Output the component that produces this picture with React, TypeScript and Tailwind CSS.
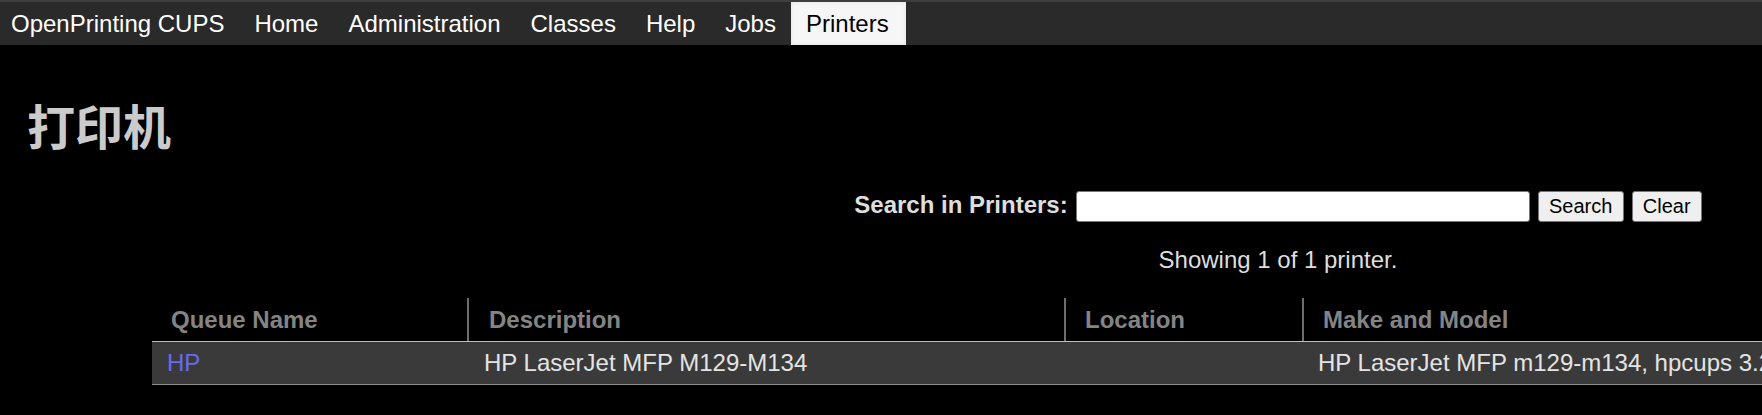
import React from "react";

const navItems = ["Home", "Administration", "Classes", "Help", "Jobs"];

export default function App() {
  return (
    <div className="w-[1762px] h-[415px] overflow-hidden bg-black font-['Liberation_Sans',Arial,sans-serif] text-[24px] text-[#e0e0e0]">
      <nav className="flex h-[45px] border-t-2 border-[#3e3e3e] bg-[#2a2a2a] text-white">
        <a className="flex h-full items-center pl-[11px] pr-[15px]">OpenPrinting CUPS</a>
        {navItems.map((n) => (
          <a key={n} className="flex h-full items-center px-[15px]">
            {n}
          </a>
        ))}
        <a className="flex h-full items-center pl-[15px] pr-[17px] bg-[#f6f6f6] text-black shadow-[inset_0_0_4px_rgba(0,0,0,0.08)]">
          Printers
        </a>
      </nav>
      <div className="w-[2529px] pl-[27px]">
        <h1 className="mt-[55px] text-[48px] leading-[48px] font-bold text-[#cbcbcb] font-['Noto_Sans_CJK_SC','Noto_Sans',sans-serif]">
          打印机
        </h1>
        <form className="mt-[43px] flex justify-center items-start h-[31px]">
          <b className="font-bold text-[#dedede] leading-[27.6px]">Search in Printers:</b>
          <input
            type="text"
            className="ml-[8px] w-[454px] h-[31px] rounded-[3px] border border-[#767676] bg-white text-[20px] text-black px-[3px]"
          />
          <button
            type="button"
            className="ml-[8px] w-[86px] h-[31px] rounded-[3px] border border-[#767676] bg-[#efefef] text-[20px] leading-[23px] text-black"
          >
            Search
          </button>
          <button
            type="button"
            className="ml-[8px] w-[70px] h-[31px] rounded-[3px] border border-[#767676] bg-[#efefef] text-[20px] leading-[23px] text-black"
          >
            Clear
          </button>
        </form>
        <p className="mt-[20px] text-center text-[#dedede]">Showing 1 of 1 printer.</p>
        <div className="ml-[125px] mt-[20px] w-[2300px]">
          <div className="grid grid-cols-[315px_597px_238px_1150px] border-b border-[#bdbdbd] font-bold text-[#848484]">
            <div className="h-[43px] flex items-center pl-[19px]">Queue Name</div>
            <div className="h-[43px] flex items-center pl-[20px] border-l-2 border-[#6e6e6e]">Description</div>
            <div className="h-[43px] flex items-center pl-[19px] border-l-2 border-[#6e6e6e]">Location</div>
            <div className="h-[43px] flex items-center pl-[19px] border-l-2 border-[#6e6e6e]">Make and Model</div>
          </div>
          <div className="grid grid-cols-[315px_597px_238px_1150px] bg-[#3a3a3a] border-b border-[#8c8c8c] text-[#e4e4e4]">
            <div className="h-[42px] flex items-center pl-[15px]">
              <a className="text-[#6a6af0]">HP</a>
            </div>
            <div className="h-[42px] flex items-center pl-[17px]">HP LaserJet MFP M129-M134</div>
            <div className="h-[42px] flex items-center pl-[17px]"></div>
            <div className="h-[42px] flex items-center pl-[16px]">HP LaserJet MFP m129-m134, hpcups 3.22.10</div>
          </div>
        </div>
      </div>
    </div>
  );
}
